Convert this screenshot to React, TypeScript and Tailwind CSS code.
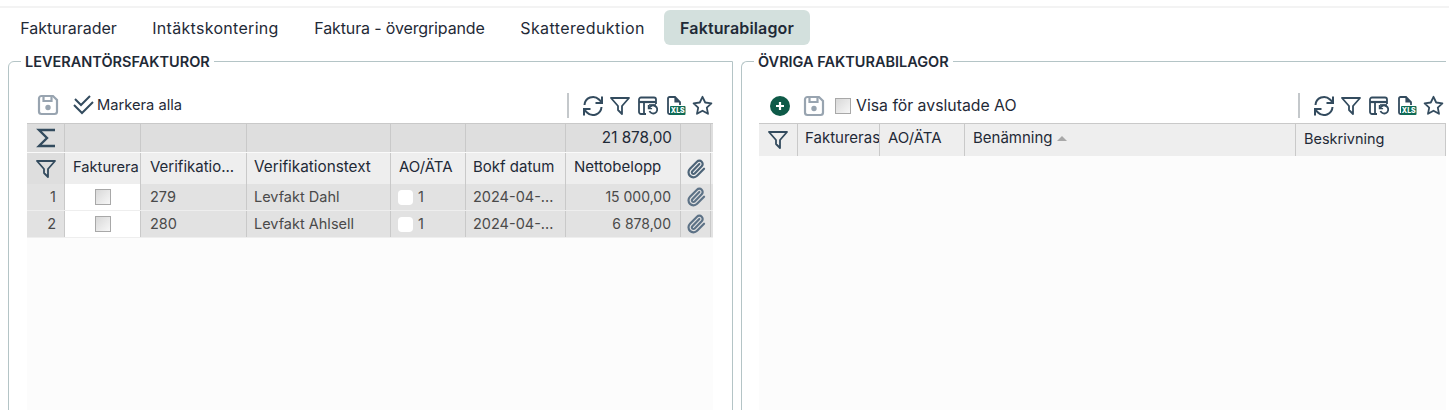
import { ReactNode } from "react";
import { Paperclip } from "lucide-react";

const TEXT = "text-[#1f2a37]";

function SaveIcon() {
  return (
    <svg width="22" height="22" viewBox="0 0 22 22" fill="none" stroke="#98a4b0" strokeWidth="2.2">
      <path d="M2 4.5A2.5 2.5 0 0 1 4.5 2H16l4 4v11.5a2.5 2.5 0 0 1-2.5 2.5h-13A2.5 2.5 0 0 1 2 17.5z" />
      <path d="M6.5 2v5h8V2" />
      <circle cx="11" cy="13.5" r="1.6" fill="#98a4b0" />
    </svg>
  );
}

function RefreshIcon() {
  return (
    <svg width="22" height="22" viewBox="0 0 22 22" fill="none" stroke="#334b5e" strokeWidth="2">
      <path d="M2.5 10A8.5 8.5 0 0 1 17 4.5L19.5 7" />
      <path d="M20 1.5V8h-6.5" />
      <path d="M19.5 12A8.5 8.5 0 0 1 5 17.5L2.5 15" />
      <path d="M2 20.5V14h6.5" />
    </svg>
  );
}

function FilterIcon({ size = 20 }: { size?: number }) {
  return (
    <svg width={size} height={size} viewBox="0 0 20 20" fill="none" stroke="#334b5e" strokeWidth="1.8" strokeLinejoin="round">
      <path d="M1 2h18l-7 8v8l-4-4v-4z" />
    </svg>
  );
}

function SumIcon() {
  return (
    <svg width="20" height="22" viewBox="0 0 20 22" fill="none" stroke="#334b5e" strokeWidth="2.4">
      <path d="M19 3H3l8 8-8 8h16" />
    </svg>
  );
}

function TableRestoreIcon() {
  return (
    <svg width="20" height="20" viewBox="0 0 20 20" fill="none" stroke="#334b5e" strokeWidth="1.8">
      <path d="M8 18H3a2 2 0 0 1-2-2V3.5a2 2 0 0 1 2-2h13a2 2 0 0 1 2 2V8" />
      <path d="M1 6h17" strokeWidth="2.2" />
      <path d="M6 6v12" />
      <path d="M11 9h7" strokeWidth="1.6" />
      <path d="M11.5 15a4 4 0 1 0 1-4.5L10.5 12.2" strokeWidth="1.8" />
      <path d="M10.5 9v3.6h3.6" strokeWidth="1.4" />
    </svg>
  );
}

function XlsIcon() {
  return (
    <svg width="20" height="20" viewBox="0 0 20 20" fill="none">
      <path d="M2 9V2.5A1.5 1.5 0 0 1 3.5 1H9l5 5v3M2 9v7.5A1.5 1.5 0 0 0 3.5 18H5" stroke="#334b5e" strokeWidth="1.8" />
      <path d="M9 1v5h5" fill="#334b5e" stroke="#334b5e" strokeWidth="1.2" />
      <rect x="4" y="10" width="15.5" height="9" rx="1" fill="#0f6b55" />
      <text x="11.8" y="17" textAnchor="middle" fontSize="7" fontWeight="800" fill="#fff" fontFamily="Inter, sans-serif">XLS</text>
    </svg>
  );
}

function StarIcon() {
  return (
    <svg width="21" height="21" viewBox="0 0 21 21" fill="none" stroke="#334b5e" strokeWidth="1.8" strokeLinejoin="round">
      <path d="M10.5 1.8l2.7 5.7 6.2.8-4.6 4.3 1.2 6.2-5.5-3.1-5.5 3.1 1.2-6.2L1.6 8.3l6.2-.8z" />
    </svg>
  );
}

function Clip({ color }: { color: string }) {
  return <Paperclip size={20} strokeWidth={2.6} color={color} />;
}

function Checkbox() {
  return <span className="w-4 h-4 block border border-[#a8a8a8] bg-gradient-to-br from-[#d8d8d8] to-[#f7f7f7]" />;
}

function GridTools() {
  return (
    <div className="flex items-center">
      <div className="w-0.5 h-[25px] bg-[#c4c8cb] mr-[13px]" />
      <div className="flex items-center gap-[6px]">
        <RefreshIcon />
        <FilterIcon />
        <span className="ml-[2px]"><TableRestoreIcon /></span>
        <span className="ml-[2px]"><XlsIcon /></span>
        <StarIcon />
      </div>
    </div>
  );
}

function Panel({ title, className, children }: { title: string; className: string; children: ReactNode }) {
  return (
    <fieldset className={`border border-[#b4c4c6] rounded-tl-md min-w-0 h-[360px] ${className}`}>
      <legend className={`ml-3 px-1 text-[14.5px] font-semibold leading-[17px] ${TEXT}`}>{title}</legend>
      {children}
    </fieldset>
  );
}

const LEFT_COLS = "grid-cols-[38px_76px_106px_144px_75px_100px_115px_30px_2px]";
const RIGHT_COLS = "grid-cols-[39px_82px_85px_331px_150px]";

function Cell({ className = "", children }: { className?: string; children?: ReactNode }) {
  return <div className={`border-r border-[#c9c9c9] flex items-center min-w-0 overflow-hidden whitespace-nowrap ${className}`}>{children}</div>;
}

function Row({ num, ver, text, date, amount }: { num: string; ver: string; text: string; date: string; amount: string }) {
  return (
    <div className={`grid ${LEFT_COLS} h-[27px] bg-[#e2e2e2] border-b border-[#eeeeee] text-[14.5px] text-[#4a4a4a]`}>
      <Cell className="justify-end pr-2">{num}</Cell>
      <Cell className="justify-center bg-white"><Checkbox /></Cell>
      <Cell className="pl-[9px]">{ver}</Cell>
      <Cell className="pl-[7px]">{text}</Cell>
      <Cell className="pl-[7px]">
        <span className="w-[15px] h-[15px] rounded-[4px] bg-white mr-[5px]" />1
      </Cell>
      <Cell className="pl-[7px]">{date}</Cell>
      <Cell className="justify-end pr-[9px] text-sm">{amount}</Cell>
      <Cell className="justify-center"><Clip color="#5d7286" /></Cell>
    </div>
  );
}

const TABS = [
  { label: "Fakturarader", className: "w-[129px]" },
  { label: "Intäktskontering", className: "w-[158px] tracking-[0.3px]" },
  { label: "Faktura - övergripande", className: "w-[203px] tracking-[-0.14px]" },
  { label: "Skattereduktion", className: "w-[156px] tracking-[0.4px]" },
];

export default function App() {
  return (
    <div className="w-[1449px] h-[410px] overflow-hidden bg-white font-['Inter',sans-serif]">
      <div className="h-2 border-b-2 border-[#f3f3f3] mb-0.5" />

      <div className="flex h-[35px] pl-1 gap-[3.5px] items-stretch text-base">
        {TABS.map((tab) => (
          <div key={tab.label} className={`flex items-center justify-center ${tab.className} ${TEXT}`}>{tab.label}</div>
        ))}
        <div className={`w-[146px] flex items-center justify-center rounded-md bg-[#d3e0dd] font-semibold tracking-[0.14px] ${TEXT}`}>Fakturabilagor</div>
      </div>

      <div className="flex pl-2 pt-2 gap-2">
        <Panel title="LEVERANTÖRSFAKTUROR" className="w-[725px]">
          <div className="pl-[18px] pr-[19px]">
            <div className="flex items-center justify-between h-[25px] mt-[23px] mb-[5px]">
              <div className={`flex items-center pl-[10px] text-[14.7px] ${TEXT}`}>
                <SaveIcon />
                <svg className="ml-[14px] mr-[3px]" width="21" height="21" viewBox="0 0 21 21" fill="none" stroke="#334b5e" strokeWidth="2">
                  <path d="M2 4l6 6 9-9" />
                  <path d="M1 10l8 8L20 7" />
                </svg>
                Markera alla
              </div>
              <GridTools />
            </div>

            <div className="text-[15px]">
              <div className={`grid ${LEFT_COLS} h-[29px] bg-[#dedede] border-t border-[#c9c9c9] ${TEXT}`}>
                <Cell className="justify-center"><SumIcon /></Cell>
                <Cell />
                <Cell />
                <Cell />
                <Cell />
                <Cell />
                <Cell className="justify-end pr-2 text-[15.3px]">21 878,00</Cell>
                <Cell />
                <Cell className="border-r-0" />
              </div>
              <div className={`grid ${LEFT_COLS} h-8 bg-[#eeeeee] border-t border-[#fafafa] ${TEXT}`}>
                <Cell className="justify-center bg-[#dedede]"><FilterIcon /></Cell>
                <Cell className="pl-2 pb-0.5 text-[14.7px]">Fakturera</Cell>
                <Cell className="pl-[9px] pb-0.5">Verifikatio...</Cell>
                <Cell className="pl-[7px] pb-0.5 text-[15.3px]">Verifikationstext</Cell>
                <Cell className="pl-2 pb-0.5">AO/ÄTA</Cell>
                <Cell className="pl-[7px] pb-0.5">Bokf datum</Cell>
                <Cell className="pl-2 pb-0.5">Nettobelopp</Cell>
                <Cell className="justify-center"><Clip color="#4d6478" /></Cell>
                <div />
              </div>
              <Row num="1" ver="279" text="Levfakt Dahl" date="2024-04-..." amount="15 000,00" />
              <Row num="2" ver="280" text="Levfakt Ahlsell" date="2024-04-..." amount="6 878,00" />
              <div className="h-[172px] bg-[#fcfcfc]" />
            </div>
          </div>
        </Panel>

        <Panel title="ÖVRIGA FAKTURABILAGOR" className="w-[705px] border-r-0">
          <div className="pl-[17px]">
            <div className="flex items-center justify-between h-[25px] mt-[23px] mb-[5px] pr-[2px]">
              <div className={`flex items-center pl-[11px] text-[15.8px] ${TEXT}`}>
                <span className="w-5 h-5 rounded-full bg-[#0e5a48] flex items-center justify-center">
                  <svg width="10" height="10" viewBox="0 0 10 10" stroke="#fff" strokeWidth="2.2"><path d="M5 1v8M1 5h8" /></svg>
                </span>
                <span className="ml-[13px]"><SaveIcon /></span>
                <span className="ml-[10px] mr-[5px]"><Checkbox /></span>
                Visa för avslutade AO
              </div>
              <GridTools />
            </div>
            <div className={`grid ${RIGHT_COLS} h-[33px] bg-[#eeeeee] border-t border-[#c9c9c9] text-[15px] ${TEXT}`}>
              <Cell className="justify-center"><FilterIcon /></Cell>
              <Cell className="pl-[7px] pb-[3px]">Faktureras</Cell>
              <Cell className="pl-2 pb-[3px]">AO/ÄTA</Cell>
              <Cell className="pl-2 pb-[3px]">
                Benämning
                <span className="ml-1 w-0 h-0 border-x-[5px] border-x-transparent border-b-[5px] border-b-[#a8a8a8]" />
              </Cell>
              <Cell className="pl-2 pb-[3px] text-[14.5px]">Beskrivning</Cell>
            </div>
            <div className="w-[687px] h-[260px] bg-[#fcfcfc]" />
          </div>
        </Panel>
      </div>
    </div>
  );
}
